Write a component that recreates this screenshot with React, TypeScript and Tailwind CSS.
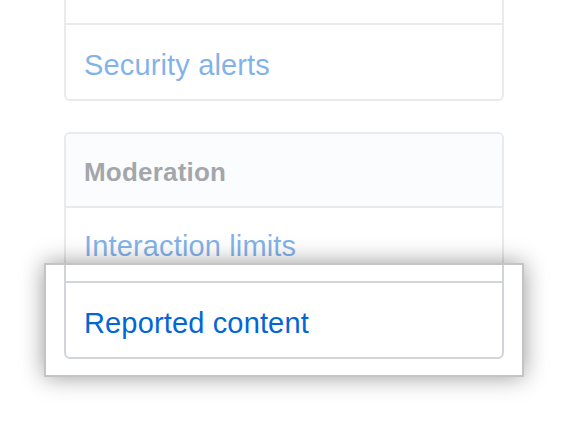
const linkRow = "border-t-2 border-[#d1d5da] pl-[18px] text-[29px] leading-[42px] tracking-[0.15px] text-[#0366d6]";

export default function App() {
  return (
    <div className="relative h-[434px] w-[569px] overflow-hidden bg-white font-['Liberation_Sans',Arial,sans-serif]">
      {/* Settings sidebar */}
      <div className="ml-[64px] w-[440px]">
        <div className="-mt-[50px] rounded-[6px] border-2 border-[#d1d5da]">
          <div className="h-[71px]" />
          <div className={`${linkRow} h-[76px] pt-[19px]`}>Security alerts</div>
        </div>

        <div className="mt-[31px] rounded-[6px] border-2 border-[#d1d5da]">
          <div className="h-[72px] rounded-t-[4px] bg-[#f6f8fa] pl-[18px] pt-[19px] text-[26px] font-bold leading-[39px] tracking-[0.2px] text-[#474d54]">
            Moderation
          </div>
          <div className={`${linkRow} h-[75px] pt-[17px]`}>Interaction limits</div>
          <div className={`${linkRow} h-[76px] pt-[19px]`}>Reported content</div>
        </div>
      </div>

      {/* Highlight over the active item */}
      <div className="absolute left-[44px] top-[263px] h-[114px] w-[480px] border-2 border-[#c4c4c4] shadow-[0_0_22px_rgba(0,0,0,0.4),0_0_0_2000px_rgba(255,255,255,0.5)]" />
    </div>
  );
}
